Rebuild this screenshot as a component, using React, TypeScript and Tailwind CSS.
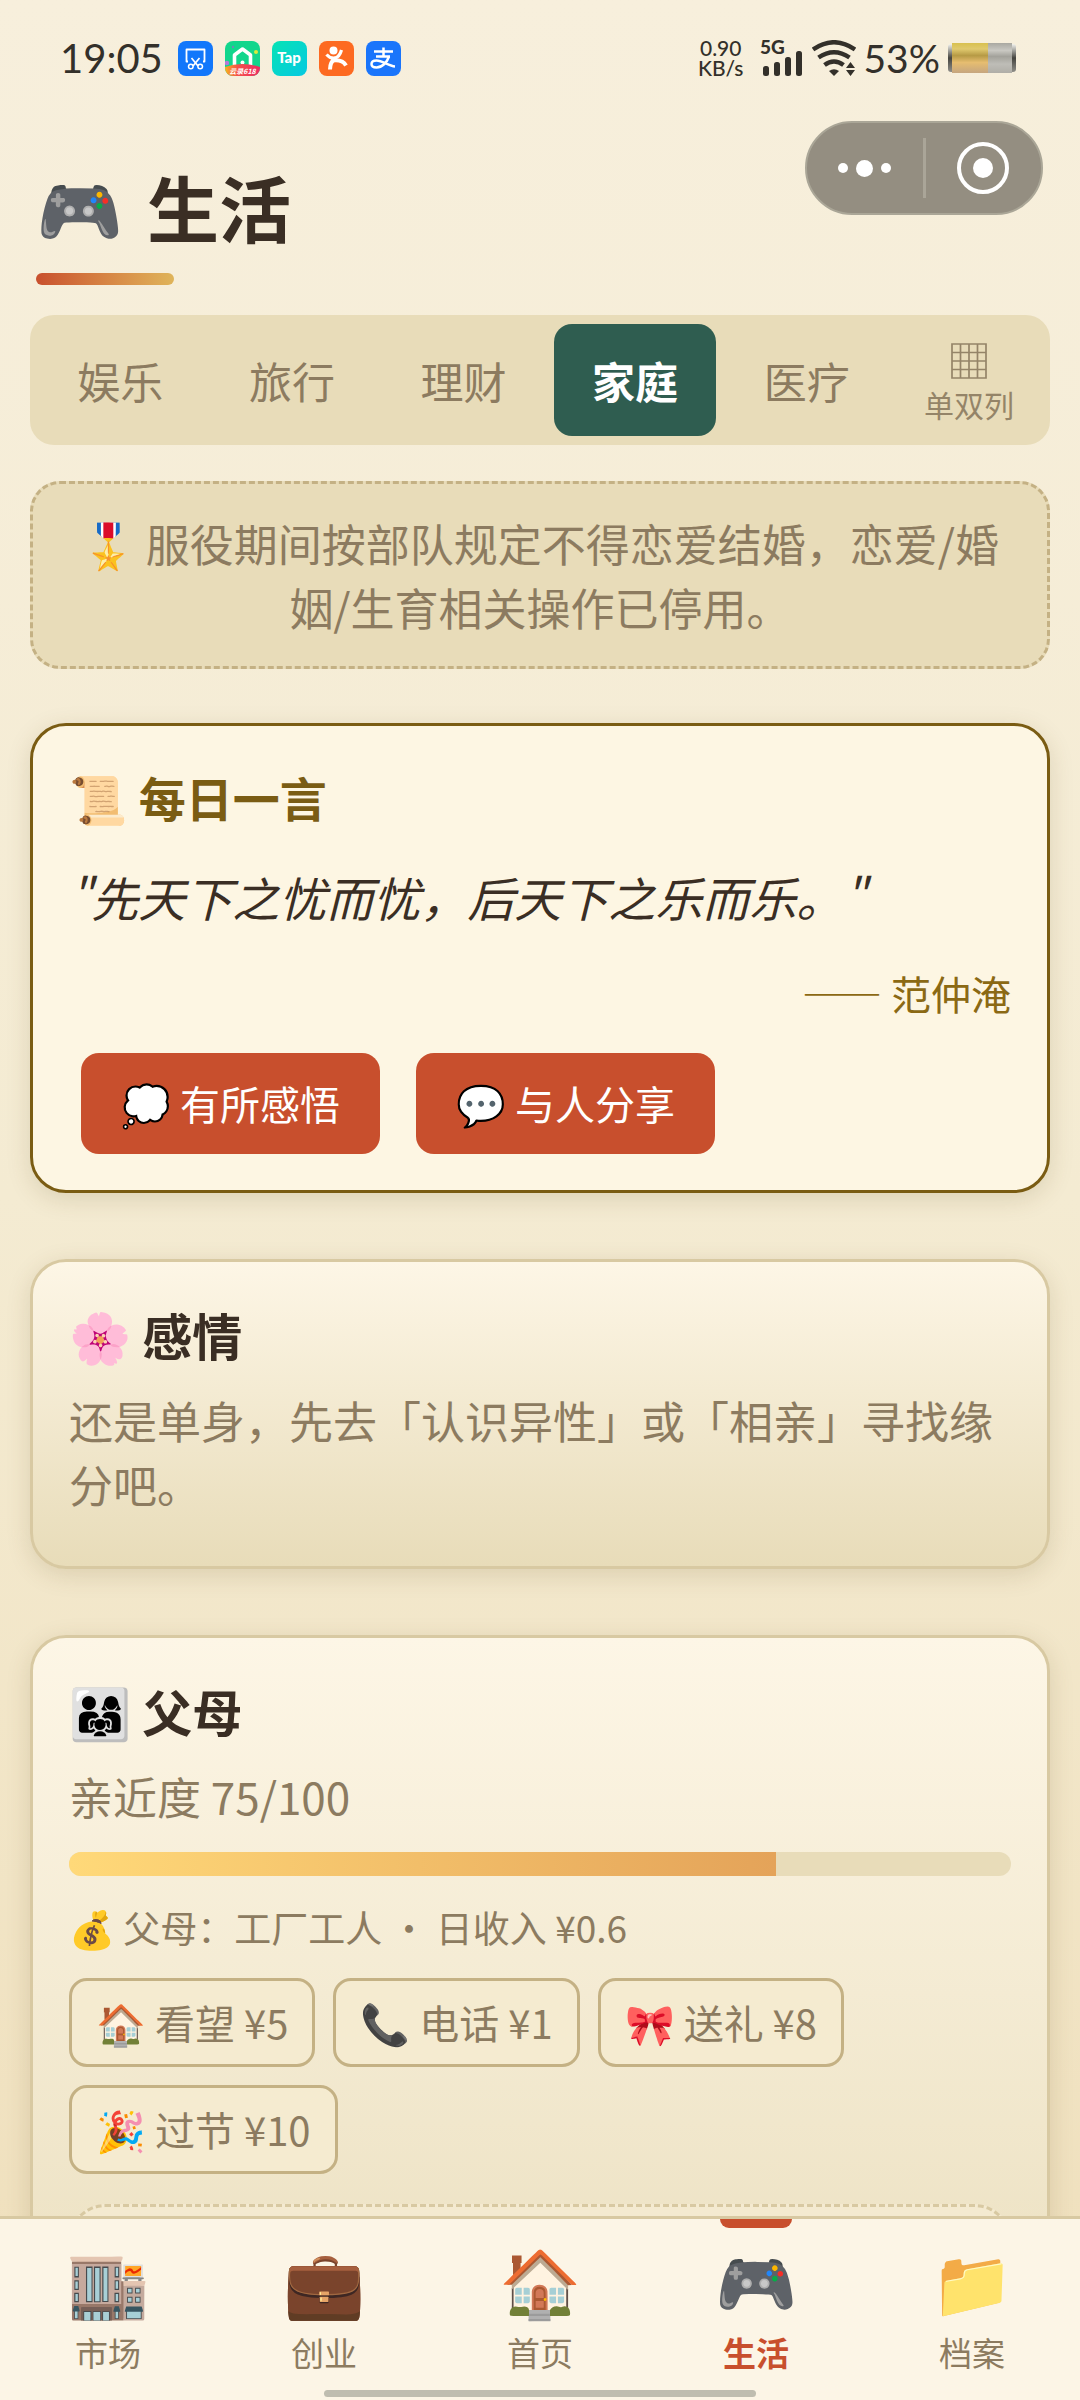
import { useState } from 'react';
import type { ReactNode } from 'react';
import clsx from 'clsx';

const tabs = ['娱乐', '旅行', '理财', '家庭', '医疗'];

const navItems = [
  { label: '市场', icon: '🏬' },
  { label: '创业', icon: '💼' },
  { label: '首页', icon: '🏠' },
  { label: '生活', icon: '🎮' },
  { label: '档案', icon: '📁' },
];

const parentActions = [
  { icon: '🏠', label: '看望', cost: 5 },
  { icon: '📞', label: '电话', cost: 1 },
  { icon: '🎀', label: '送礼', cost: 8 },
  { icon: '🎉', label: '过节', cost: 10 },
];

function AppBadges() {
  return (
    <div className="flex gap-3">
      <svg className="size-[35px]" viewBox="0 0 35 35" fill="none">
        <rect width="35" height="35" rx="8" fill="#1277fb" />
        <path d="M10 20.5H8.5V8.5h18v12H25" stroke="#fff" strokeWidth="1.8" strokeLinejoin="round" />
        <path d="m13.500 17 6.500 8M21.500 17 15 25" stroke="#fff" strokeWidth="1.700" />
        <circle cx="12.800" cy="25.500" r="2.300" stroke="#fff" strokeWidth="1.500" />
        <circle cx="22.200" cy="25.500" r="2.300" stroke="#fff" strokeWidth="1.500" />
      </svg>
      <svg className="size-[35px]" viewBox="0 0 35 35">
        <defs>
          <clipPath id="badge-clip">
            <rect width="35" height="35" rx="8" />
          </clipPath>
          <linearGradient id="badge-ribbon" x1="0" x2="1">
            <stop offset="0" stopColor="#f9b21c" />
            <stop offset=".35" stopColor="#f4534a" />
            <stop offset="1" stopColor="#ee2b63" />
          </linearGradient>
        </defs>
        <g clipPath="url(#badge-clip)">
          <rect width="35" height="35" fill="#12d68c" />
          <path d="M9.500 25V14l8-6 8 6v11" fill="none" stroke="#fff" strokeWidth="3.600" strokeLinejoin="round" />
          <circle cx="17.500" cy="21.500" r="2" fill="#fff" />
          <circle cx="31" cy="11" r="2" fill="#d9ea3c" />
          <circle cx="2" cy="22" r="2.200" fill="#b978d8" />
          <circle cx="8" cy="6" r="1.200" fill="#6c8fb0" />
          <path d="M0 26q17-6 35 0v9H0z" fill="url(#badge-ribbon)" />
          <text x="17.500" y="33" fontSize="7" fontWeight="700" fontStyle="italic" textAnchor="middle" fill="#fff" fontFamily="Noto Sans CJK SC, sans-serif">云录618</text>
        </g>
      </svg>
      <svg className="size-[35px]" viewBox="0 0 35 35">
        <defs>
          <linearGradient id="tap-bg" x1="0" y1="0" x2="1" y2="1">
            <stop offset="0" stopColor="#06e3b4" />
            <stop offset="1" stopColor="#06c9e2" />
          </linearGradient>
        </defs>
        <rect width="35" height="35" rx="8" fill="url(#tap-bg)" />
        <text x="17" y="22" fontSize="15" fontWeight="900" textAnchor="middle" fill="#fff" fontFamily="Lato, sans-serif">Tap</text>
      </svg>
      <svg className="size-[35px]" viewBox="0 0 35 35" fill="none">
        <rect width="35" height="35" rx="8" fill="#fd6a21" />
        <circle cx="14.500" cy="9.500" r="4" fill="#fff" />
        <path d="M7.500 13.500q4 4.500 8.500 3.500t6.500-8" stroke="#fff" strokeWidth="3.200" />
        <path d="M11 28.500q0-8 6-11.500M14.500 19.500q9-1 12.500 5" stroke="#fff" strokeWidth="4" />
      </svg>
      <svg className="size-[35px]" viewBox="0 0 35 35" fill="none">
        <rect width="35" height="35" rx="8" fill="#1a75fb" />
        <path d="M8 10.500h19M17.500 6.500v9M10 15.500h14" stroke="#fff" strokeWidth="2.500" />
        <path d="M23 15.500c-2 6-7 11-12.500 11-3.500 0-5-1.500-5-3.500s2-3.500 5-3.500c6 0 12 5.500 18.500 6" stroke="#fff" strokeWidth="2.500" />
      </svg>
    </div>
  );
}

function StatusBar() {
  return (
    <div className="flex h-[116px] items-center justify-between pr-16 pl-[60px] font-[Lato,sans-serif] text-[#33302a]">
      <div className="flex items-center gap-[15px]">
        <span className="text-[40px] leading-none">19:05</span>
        <AppBadges />
      </div>
      <div className="flex items-center gap-2">
        <div className="mr-2 text-center text-[21px] leading-5 font-medium">
          <div>0.90</div>
          <div>KB/s</div>
        </div>
        <svg className="h-12 w-11" viewBox="-2 -6 44 48" fill="currentColor">
          <text x="-2" y="14" fontSize="19" fontWeight="900">5G</text>
          <rect x="1" y="26" width="6" height="10" rx="2.500" />
          <rect x="12" y="22" width="6" height="14" rx="2.500" />
          <rect x="23" y="17" width="6" height="19" rx="2.500" />
          <rect x="34" y="11" width="6" height="25" rx="2.500" />
        </svg>
        <svg className="h-9 w-11" viewBox="0 0 44 36" fill="none" stroke="currentColor" strokeWidth="4.500">
          <path d="M1 9.500Q22-5 43 9.500" />
          <path d="M6.500 17.500Q22 7 37.500 17.500" />
          <path d="M12.500 25Q22 18 31.500 25" />
          <path d="M17 31q5-3.500 10 0l-5 5z" fill="currentColor" stroke="none" />
          <path d="m34 28 4.500-6 4.500 6zM34 30l4.500 6 4.500-6z" fill="currentColor" stroke="none" />
        </svg>
        <span className="text-[39px] leading-none">53%</span>
        <svg className="h-[30px] w-[68px]" viewBox="0 0 68 30">
          <defs>
            <linearGradient id="cell-full" x1="0" x2="0" y1="0" y2="1">
              <stop offset="0" stopColor="#d8c04f" />
              <stop offset=".2" stopColor="#e0c96e" />
              <stop offset=".42" stopColor="#b69a45" />
              <stop offset=".65" stopColor="#e6bd70" />
              <stop offset="1" stopColor="#c6a67f" />
            </linearGradient>
            <linearGradient id="cell-empty" x1="0" x2="0" y1="0" y2="1">
              <stop offset="0" stopColor="#a9a8a1" />
              <stop offset=".25" stopColor="#c9c8c2" />
              <stop offset=".45" stopColor="#a3a29b" />
              <stop offset=".7" stopColor="#bebdb7" />
              <stop offset="1" stopColor="#b0aea7" />
            </linearGradient>
            <linearGradient id="cell-cap" x1="0" x2="0" y1="0" y2="1">
              <stop offset="0" stopColor="#f2f2ee" />
              <stop offset=".5" stopColor="#45443f" />
              <stop offset="1" stopColor="#8f8e88" />
            </linearGradient>
          </defs>
          <rect y="1" width="68" height="28" rx="3" fill="url(#cell-cap)" />
          <rect x="4" width="37" height="30" fill="url(#cell-full)" />
          <rect x="40" width="24" height="30" fill="url(#cell-empty)" />
        </svg>
      </div>
    </div>
  );
}

function Capsule() {
  return (
    <div className="absolute top-[121px] right-[37px] flex h-[94px] w-[238px] items-center rounded-full border-2 border-[#aaa697] bg-[#948e81]">
      <button type="button" aria-label="更多" className="flex h-full flex-1 items-center justify-center gap-2">
        <span className="size-[10px] rounded-full bg-white" />
        <span className="size-[17px] rounded-full bg-white" />
        <span className="size-[10px] rounded-full bg-white" />
      </button>
      <span className="h-[60px] w-[3px] bg-[#aaa598]" />
      <button type="button" aria-label="关闭" className="flex h-full flex-1 items-center justify-center">
        <span className="flex size-[52px] items-center justify-center rounded-full border-4 border-white">
          <span className="size-5 rounded-full bg-white" />
        </span>
      </button>
    </div>
  );
}

function Card({ children, className }: { children: ReactNode; className?: string }) {
  return (
    <section className={clsx('rounded-[36px] border-3 p-9 shadow-[0_6px_24px_rgba(90,70,20,0.15)]', className)}>
      {children}
    </section>
  );
}

export default function App() {
  const [tab, setTab] = useState('家庭');
  const [page, setPage] = useState('生活');
  const closeness = 75;

  return (
    <div
      lang="zh-CN"
      className="relative flex h-screen flex-col overflow-hidden bg-linear-to-b from-[#f7efdc] via-[#f4ebd2] to-[#efdfbb] font-['Noto_Sans_CJK_SC',sans-serif] text-[#3a2e24]"
    >
      <StatusBar />
      <Capsule />

      <main className="min-h-0 flex-1 overflow-hidden px-[30px]">
        <h1 className="flex items-center gap-6 pt-[42px] pl-[6px] text-[72px] leading-[96px] font-bold">
          <span className="text-[70px]">🎮</span>
          生活
        </h1>
        <div className="mt-[19px] ml-[6px] h-3 w-[138px] rounded-full bg-linear-to-r from-[#c84f2d] to-[#dfb45a]" />

        <div className="mt-[30px] flex h-[130px] gap-[9px] rounded-3xl bg-[#e8dcb9] p-[9px] text-[#8c7b60]">
          {tabs.map((name) => (
            <button
              key={name}
              type="button"
              onClick={() => setTab(name)}
              className={clsx('flex-1 rounded-[18px] text-[43px]', tab === name && 'bg-[#2f5d50] font-bold text-white')}
            >
              {name}
            </button>
          ))}
          <button type="button" className="flex w-36 flex-col items-center justify-center gap-1 pt-2 text-[30px] leading-[42px] opacity-90">
            <svg className="size-9" viewBox="0 0 36 36" fill="none" stroke="currentColor" strokeWidth="1.700">
              <path d="M1 1h34v34H1zM9.500 1v34M18 1v34M26.500 1v34M1 9.500h34M1 18h34M1 26.500h34" />
            </svg>
            单双列
          </button>
        </div>

        <p className="mt-9 rounded-[30px] border-3 border-dashed border-[#c4b184] bg-[#e8dcb9] px-9 py-[27px] text-center text-[44px] leading-[64px] text-[#8c7b60]">
          🎖️ 服役期间按部队规定不得恋爱结婚，恋爱/婚姻/生育相关操作已停用。
        </p>

        <Card className="mt-[54px] border-[#7a5c13] bg-[#fdf6e3]">
          <h2 className="text-[47px] leading-[70px] font-bold text-[#7a5c13]">📜 每日一言</h2>
          <blockquote className="mt-[15px] text-[47px] leading-[100px] italic">"先天下之忧而忧，后天下之乐而乐。"</blockquote>
          <p className="mt-4 text-right text-[40px] leading-[60px] text-[#8b6914]">—— 范仲淹</p>
          <div className="mt-[30px] flex gap-9 pl-3">
            <button type="button" className="rounded-[18px] bg-[#c84f2d] px-10 text-[40px] leading-[101px] text-white">
              💭 有所感悟
            </button>
            <button type="button" className="rounded-[18px] bg-[#c84f2d] px-10 text-[40px] leading-[101px] text-white">
              💬 与人分享
            </button>
          </div>
        </Card>

        <Card className="mt-[66px] border-[#d8c9a2] bg-linear-to-b from-[#fdf6e6] to-[#e8dcb9]">
          <h2 className="text-[50px] leading-[72px] font-bold">🌸 感情</h2>
          <p className="mt-[18px] mb-[14px] text-[44px] leading-[64px] text-[#8c7b60]">
            还是单身，先去「认识异性」或「相亲」寻找缘分吧。
          </p>
        </Card>

        <Card className="mt-[66px] border-[#d8c9a2] bg-linear-to-b from-[#fdf6e6] to-[#e8dcb9]">
          <h2 className="text-[50px] leading-[72px] font-bold">👨‍👩‍👧 父母</h2>
          <p className="mt-[18px] text-[44px] leading-[64px] text-[#8c7b60]">亲近度 {closeness}/100</p>
          <div className="mt-6 h-6 overflow-hidden rounded-full bg-[#e8dcb9]">
            <div className="h-full bg-linear-to-r from-[#ffd979] to-[#e4a359]" style={{ width: `${closeness}%` }} />
          </div>
          <p className="mt-[21px] text-[37px] leading-[60px] text-[#8c7b60]">💰 父母：工厂工人 · 日收入 ¥0.6</p>
          <div className="mt-[21px] flex flex-wrap gap-[18px]">
            {parentActions.map((action) => (
              <button
                key={action.label}
                type="button"
                className="rounded-[18px] border-3 border-[#c4b184] bg-[#f5ebd0] px-6 text-[40px] leading-[83px] text-[#8c7b60]"
              >
                {action.icon} {action.label} ¥{action.cost}
              </button>
            ))}
          </div>
          <div className="mt-[30px] h-60 rounded-[36px] border-3 border-dashed border-[#d8c9a2] bg-[#f4ead0]" />
        </Card>
      </main>

      <nav className="relative flex h-[184px] shrink-0 border-t-3 border-[#d8c9a2] bg-[#fcf5e6]">
        {navItems.map((item) => (
          <button
            key={item.label}
            type="button"
            onClick={() => setPage(item.label)}
            className={clsx(
              'relative flex flex-1 flex-col items-center pt-[26px] text-[33px] leading-[48px]',
              page === item.label ? 'font-bold text-[#c84f2d]' : 'text-[#8c7b60]',
            )}
          >
            {page === item.label && <span className="absolute top-0 h-[9px] w-[72px] rounded-b-[9px] bg-[#c84f2d]" />}
            <span className="mb-[3px] font-['Noto_Color_Emoji',sans-serif] text-[66px] leading-[80px]">{item.icon}</span>
            {item.label}
          </button>
        ))}
        <span className="absolute bottom-[3px] left-1/2 h-[7px] w-2/5 -translate-x-1/2 rounded-full bg-[#bfbdb0]" />
      </nav>
    </div>
  );
}
